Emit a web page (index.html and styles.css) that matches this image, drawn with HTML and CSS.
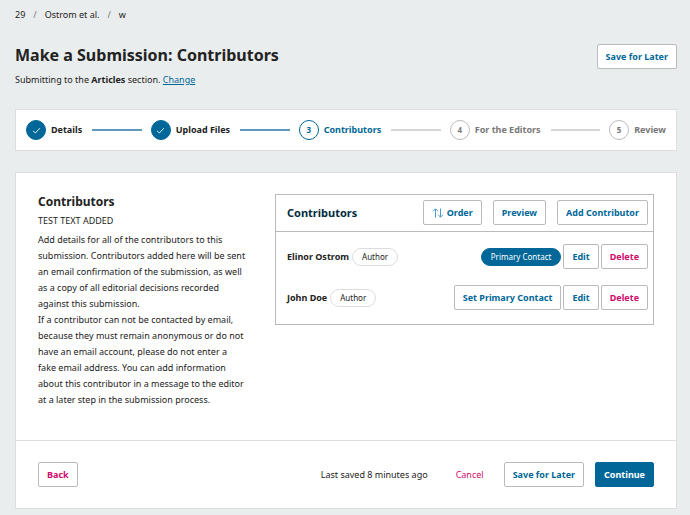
FILE: index.html
```html
<!DOCTYPE html>
<html lang="en">
<head>
<meta charset="utf-8">
<title>Make a Submission: Contributors</title>
<link rel="stylesheet" href="styles.css">
</head>
<body>
<main class="page">
  <nav class="breadcrumbs" aria-label="Breadcrumb">
    <span>29</span><span class="separator">/</span><span>Ostrom et al.</span><span class="separator">/</span><span>w</span>
  </nav>

  <header class="page-header">
    <div>
      <h1 class="page-title">Make a Submission: Contributors</h1>
      <p class="page-section">Submitting to the <strong>Articles</strong> section. <a class="link" href="#">Change</a></p>
    </div>
    <button class="button" type="button">Save for Later</button>
  </header>

  <ol class="steps">
    <li class="step step-done">
      <span class="step-marker"><svg class="check" viewBox="0 0 10 10" aria-hidden="true"><path d="M1.2 5.4 3.7 7.8 8.8 2.4"/></svg></span>
      <span>Details</span>
    </li>
    <li class="step step-done">
      <span class="step-marker"><svg class="check" viewBox="0 0 10 10" aria-hidden="true"><path d="M1.2 5.4 3.7 7.8 8.8 2.4"/></svg></span>
      <span>Upload Files</span>
    </li>
    <li class="step step-current" aria-current="step">
      <span class="step-marker">3</span>
      <span>Contributors</span>
    </li>
    <li class="step">
      <span class="step-marker">4</span>
      <span>For the Editors</span>
    </li>
    <li class="step">
      <span class="step-marker">5</span>
      <span>Review</span>
    </li>
  </ol>

  <section class="panel">
    <div class="panel-body">
      <div class="description">
        <h2 class="description-title">Contributors</h2>
        <p class="description-note">TEST TEXT ADDED</p>
        <p>Add details for all of the contributors to this submission. Contributors added here will be sent an email confirmation of the submission, as well as a copy of all editorial decisions recorded against this submission.</p>
        <p>If a contributor can not be contacted by email, because they must remain anonymous or do not have an email account, please do not enter a fake email address. You can add information about this contributor in a message to the editor at a later step in the submission process.</p>
      </div>

      <div class="list">
        <div class="list-header">
          <h3 class="list-title">Contributors</h3>
          <div class="list-actions">
            <button class="button" type="button"><svg class="order-icon" viewBox="0 0 12 10" aria-hidden="true"><path d="M3.5 9.5V1M1 3.3 3.5.8 6 3.3M8.5.5V9M6.2 6.7 8.5 9.2 11 6.7"/></svg>Order</button>
            <button class="button" type="button">Preview</button>
            <button class="button" type="button">Add Contributor</button>
          </div>
        </div>
        <ul class="list-items">
          <li class="item">
            <strong>Elinor Ostrom</strong><span class="badge">Author</span>
            <div class="item-actions">
              <span class="badge badge-primary">Primary Contact</span>
              <button class="button" type="button">Edit</button>
              <button class="button button-warn" type="button">Delete</button>
            </div>
          </li>
          <li class="item">
            <strong>John Doe</strong><span class="badge">Author</span>
            <div class="item-actions">
              <button class="button" type="button">Set Primary Contact</button>
              <button class="button" type="button">Edit</button>
              <button class="button button-warn" type="button">Delete</button>
            </div>
          </li>
        </ul>
      </div>
    </div>

    <footer class="panel-footer">
      <button class="button button-warn" type="button">Back</button>
      <div class="footer-actions">
        <span class="saved" role="status">Last saved 8 minutes ago</span>
        <button class="button button-plain" type="button">Cancel</button>
        <button class="button" type="button">Save for Later</button>
        <button class="button button-primary" type="button">Continue</button>
      </div>
    </footer>
  </section>
</main>
</body>
</html>
```
FILE: styles.css
```css
:root {
  --text: #222;
  --blue: #006798;
  --pink: #d00a6c;
  --border: #bbb;
  --border-light: #ddd;
}

* {
  box-sizing: border-box;
}

body {
  margin: 0;
  background: #eaeded;
  color: var(--text);
  font: 9px/16px "Noto Sans", sans-serif;
}

h1, h2, h3, p, ol, ul {
  margin: 0;
  padding: 0;
}

ol, ul {
  list-style: none;
}

.page {
  padding: 7px 13px 6px 15px;
}

.breadcrumbs {
  display: flex;
  gap: 8px;
}

.separator {
  color: #777;
}

.page-header {
  display: flex;
  align-items: flex-start;
  justify-content: space-between;
  margin-top: 20px;
}

.page-header .button {
  margin-top: 1px;
}

.page-title {
  font-size: 16px;
  line-height: 24px;
}

.page-section {
  margin-top: 5px;
}

.link {
  color: var(--blue);
}

.button {
  display: inline-flex;
  align-items: center;
  height: 25px;
  padding: 0 8px;
  border: 1px solid var(--border);
  border-radius: 2px;
  background: #fff;
  color: var(--blue);
  font: bold 9px/16px "Noto Sans", sans-serif;
  white-space: nowrap;
}

.button-warn {
  color: var(--pink);
}

.button-plain {
  border-color: transparent;
  background: transparent;
  color: var(--pink);
  font-weight: normal;
}

.button-primary {
  border-color: var(--blue);
  background: var(--blue);
  color: #fff;
}

.steps {
  display: flex;
  align-items: center;
  height: 42px;
  margin-top: 21px;
  padding: 0 10px;
  border: 1px solid var(--border-light);
  background: #fff;
}

.step {
  display: flex;
  flex: 1 1 auto;
  align-items: center;
  gap: 5px;
  color: #777;
  font-weight: bold;
  white-space: nowrap;
}

.step:last-child {
  flex-grow: 0;
}

.step:not(:last-child)::after {
  content: "";
  flex: 1;
  height: 2px;
  margin: 0 9px 0 5px;
  background: #d5d5d5;
}

.step-marker {
  display: flex;
  align-items: center;
  justify-content: center;
  width: 20px;
  height: 20px;
  border: 1px solid var(--border);
  border-radius: 50%;
  font-size: 8px;
}

.step-done {
  color: var(--text);
}

.step-done .step-marker {
  border-color: var(--blue);
  background: var(--blue);
}

.step-done:not(:last-child)::after {
  background: #5c9cba;
}

.step-current {
  color: var(--blue);
}

.step-current .step-marker {
  border-color: var(--blue);
}

.check {
  width: 9px;
  height: 9px;
  fill: none;
  stroke: #fff;
}

.panel {
  margin-top: 21px;
  border: 1px solid var(--border-light);
  background: #fff;
}

.panel-body {
  display: grid;
  grid-template-columns: 208px 1fr;
  gap: 29px;
  align-items: start;
  padding: 21px 22px 32px;
}

.description-title {
  font-size: 12px;
  line-height: 16px;
}

.description-note {
  margin: 3px 0;
}

.list {
  border: 1px solid var(--border);
}

.list-header {
  display: flex;
  align-items: center;
  justify-content: space-between;
  padding: 5px 5px 6px 11px;
  border-bottom: 1px solid var(--border);
}

.list-title {
  color: #002c40;
  font-size: 11px;
}

.list-actions {
  display: flex;
  gap: 11px;
}

.order-icon {
  width: 12px;
  height: 10px;
  margin-right: 3px;
  fill: none;
  stroke: #4a9ccb;
}

.list-items {
  padding: 4px 0 6px;
}

.item {
  display: flex;
  align-items: center;
  gap: 3px;
  min-height: 41px;
  padding: 0 5px 0 11px;
}

.item-actions {
  display: flex;
  align-items: center;
  gap: 2px;
  margin-left: auto;
}

.badge {
  padding: 0 9px;
  border: 1px solid var(--border-light);
  border-radius: 9px;
  font-size: 8px;
}

.badge-primary {
  border-color: var(--blue);
  background: var(--blue);
  color: #fff;
}

.panel-footer {
  display: flex;
  align-items: center;
  justify-content: space-between;
  padding: 21px 22px;
  border-top: 1px solid var(--border-light);
}

.footer-actions {
  display: flex;
  align-items: center;
  gap: 11px;
}

.saved {
  margin-right: 8px;
}
```
